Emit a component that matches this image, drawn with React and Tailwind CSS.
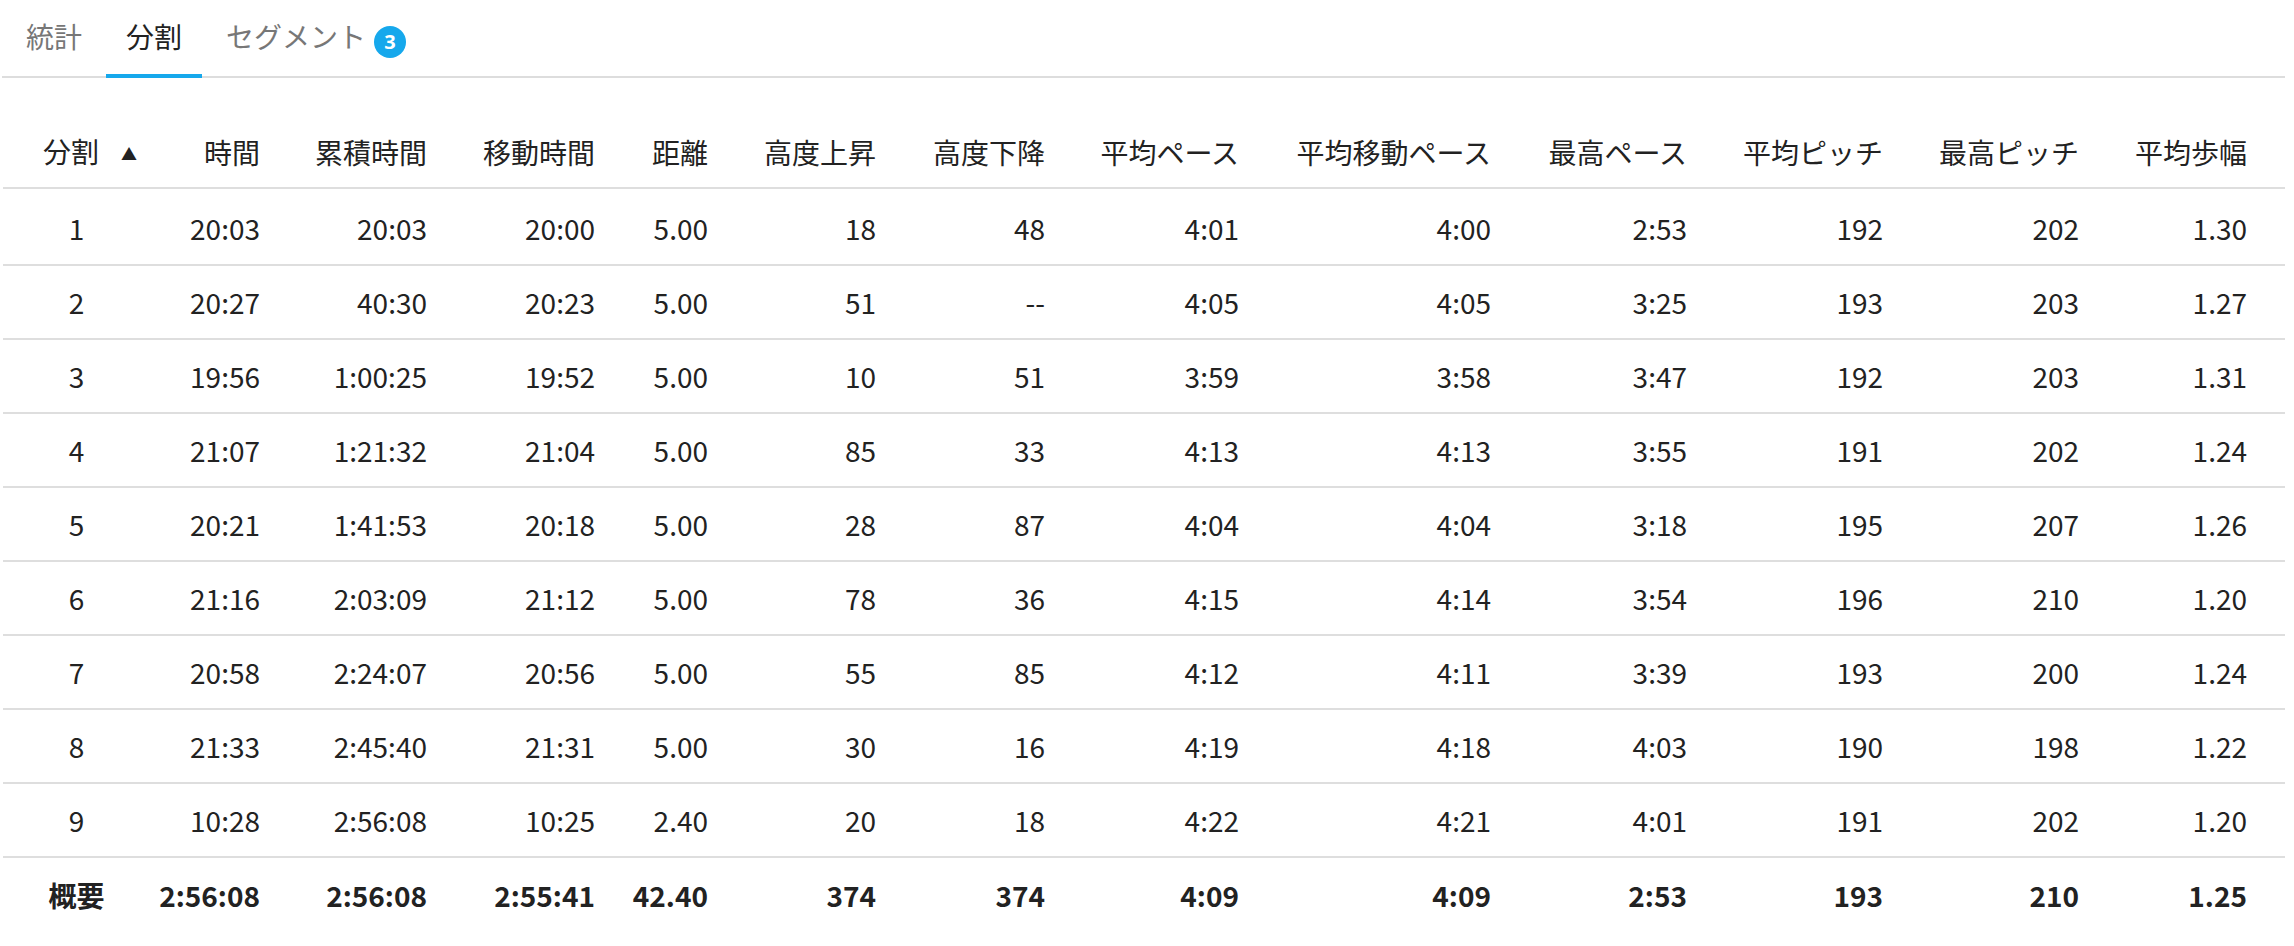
const splits = [
  ["1", "20:03", "20:03", "20:00", "5.00", "18", "48", "4:01", "4:00", "2:53", "192", "202", "1.30"],
  ["2", "20:27", "40:30", "20:23", "5.00", "51", "--", "4:05", "4:05", "3:25", "193", "203", "1.27"],
  ["3", "19:56", "1:00:25", "19:52", "5.00", "10", "51", "3:59", "3:58", "3:47", "192", "203", "1.31"],
  ["4", "21:07", "1:21:32", "21:04", "5.00", "85", "33", "4:13", "4:13", "3:55", "191", "202", "1.24"],
  ["5", "20:21", "1:41:53", "20:18", "5.00", "28", "87", "4:04", "4:04", "3:18", "195", "207", "1.26"],
  ["6", "21:16", "2:03:09", "21:12", "5.00", "78", "36", "4:15", "4:14", "3:54", "196", "210", "1.20"],
  ["7", "20:58", "2:24:07", "20:56", "5.00", "55", "85", "4:12", "4:11", "3:39", "193", "200", "1.24"],
  ["8", "21:33", "2:45:40", "21:31", "5.00", "30", "16", "4:19", "4:18", "4:03", "190", "198", "1.22"],
  ["9", "10:28", "2:56:08", "10:25", "2.40", "20", "18", "4:22", "4:21", "4:01", "191", "202", "1.20"],
];

const summary = ["概要", "2:56:08", "2:56:08", "2:55:41", "42.40", "374", "374", "4:09", "4:09", "2:53", "193", "210", "1.25"];

const headers = ["時間", "累積時間", "移動時間", "距離", "高度上昇", "高度下降", "平均ペース", "平均移動ペース", "最高ペース", "平均ピッチ", "最高ピッチ", "平均歩幅"];

const widths = ["w-[147px]", "w-[130px]", "w-[167px]", "w-[168px]", "w-[113px]", "w-[168px]", "w-[169px]", "w-[194px]", "w-[252px]", "w-[196px]", "w-[196px]", "w-[196px]", "w-[186px]"];

function cellClass(i) {
  if (i === 0) return "text-center px-0";
  if (i === 12) return "text-right pr-[38px]";
  return "text-right pr-[20px]";
}

function Tabs() {
  return (
    <div className="flex items-start gap-[4px] pl-[4px] ml-[2px] mr-[9px] h-[78px] border-b-2 border-[#dddddd]">
      <div className="px-[20px] pt-[16px] h-[78px] text-[#777777]">統計</div>
      <div className="px-[20px] pt-[16px] h-[78px] text-[#222222] border-b-4 border-[#16a8ec] -mb-[2px]">分割</div>
      <div className="flex items-start pl-[20px] pt-[16px] h-[78px] text-[#777777]">
        <span>セグメント</span>
        <span className="ml-[8px] mt-[10px] w-[32px] h-[32px] rounded-full bg-[#16a8ec] text-white text-[20px] font-bold leading-[32px] text-center font-['Open_Sans',sans-serif]">
          3
        </span>
      </div>
    </div>
  );
}

export default function App() {
  return (
    <div className="min-h-screen bg-white text-[28px] leading-[40px] text-[#222222] font-['Noto_Sans_CJK_JP','Open_Sans',sans-serif]">
      <Tabs />
      <div className="mt-[38px] pl-[3px] pr-[9px]">
        <table className="w-[2282px] table-fixed">
          <colgroup>
            {widths.map((w, i) => (
              <col key={i} className={w} />
            ))}
          </colgroup>
          <thead>
            <tr className="border-b-2 border-[#dedede]">
              <th className="h-[72px] font-normal text-left pl-[40px]">
                分割<span className="ml-[22px] text-[16px] align-[3px]">▲</span>
              </th>
              {headers.map((h, i) => (
                <th key={h} className={`h-[72px] font-normal ${cellClass(i + 1)}`}>
                  {h}
                </th>
              ))}
            </tr>
          </thead>
          <tbody>
            {splits.map((row, r) => (
              <tr key={row[0]} className="border-b-2 border-[#dedede]">
                {row.map((v, i) => (
                  <td key={i} className={`${r === 0 ? "h-[77px] pt-[2px]" : "h-[74px]"} ${cellClass(i)}`}>
                    {v}
                  </td>
                ))}
              </tr>
            ))}
            <tr>
              {summary.map((v, i) => (
                <td key={i} className={`h-[74px] font-bold ${cellClass(i)}`}>
                  {v}
                </td>
              ))}
            </tr>
          </tbody>
        </table>
      </div>
    </div>
  );
}
